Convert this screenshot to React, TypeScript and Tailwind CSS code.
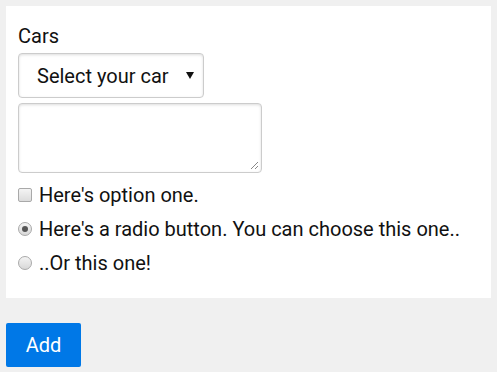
import React from 'react';

const Checkbox: React.FC = () => (
  <span className="inline-block w-[14px] h-[14px] rounded-[2px] border border-[#a9a9a9] bg-gradient-to-b from-[#f4f4f4] to-[#dcdcdc] shrink-0" />
);

const Radio: React.FC<{ checked?: boolean }> = ({ checked }) => (
  <span className="flex items-center justify-center w-[14px] h-[14px] rounded-full border border-[#a9a9a9] bg-gradient-to-b from-[#f4f4f4] to-[#d8d8d8] shrink-0">
    {checked && <span className="block w-[6px] h-[6px] rounded-full bg-[#555]" />}
  </span>
);

export default function App() {
  return (
    <div className="min-h-[372px] bg-[#f0f0f0] p-[6px] font-['Roboto',sans-serif] text-[#111]">
      <div className="bg-white px-3 pt-[18px] pb-[23px]">
        <div className="text-[20px] leading-[24px]">Cars</div>
        <div className="mt-[5px] flex items-center w-[186px] h-[45px] rounded-[4px] border border-[#ccc] shadow-[inset_0_1px_3px_#ddd] pl-[18px] pr-[9px]">
          <span className="text-[20px] flex-1">Select your car</span>
          <svg width="8" height="7" viewBox="0 0 8 7">
            <path d="M0 0H8L4 7Z" fill="#111" />
          </svg>
        </div>
        <div className="relative mt-[5px] w-[244px] h-[70px] rounded-[4px] border border-[#ccc] shadow-[inset_0_1px_3px_#ddd]">
          <svg className="absolute right-[2px] bottom-[2px]" width="9" height="9" viewBox="0 0 9 9">
            <path d="M8 1L1 8M8 5L5 8" stroke="#888" strokeWidth="1" />
          </svg>
        </div>
        <div className="mt-[10px] flex flex-col gap-[10px] text-[20px] leading-[24px]">
          <label className="flex items-center gap-[7px]">
            <Checkbox />
            <span>Here's option one.</span>
          </label>
          <label className="flex items-center gap-[7px]">
            <Radio checked />
            <span>Here's a radio button. You can choose this one..</span>
          </label>
          <label className="flex items-center gap-[7px]">
            <Radio />
            <span>..Or this one!</span>
          </label>
        </div>
      </div>
      <button className="mt-[25px] h-[44px] w-[75px] rounded-[2px] bg-[#0078e7] text-white text-[20px] font-['Roboto',sans-serif]">
        Add
      </button>
    </div>
  );
}
